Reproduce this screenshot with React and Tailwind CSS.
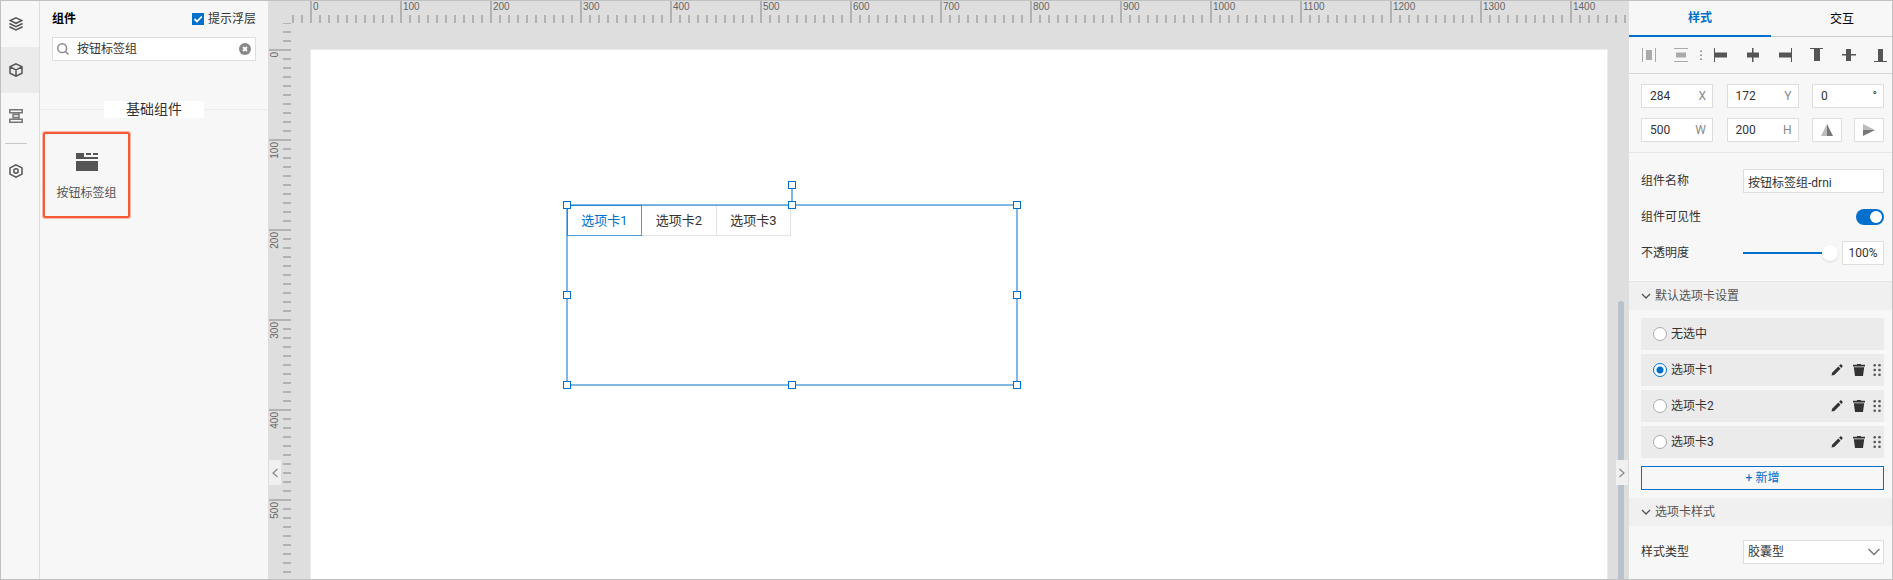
import { useState } from 'react'

const railItems = ['图层', '组件', '页面', '设置']

const alignTools = [
  { label: '左对齐', d: 'M1 0h1v14h-1zM2 4.500h12v5h-12z' },
  { label: '水平居中', d: 'M7 0h1.500v14h-1.500zM2 4.500h12v5h-12z' },
  { label: '右对齐', d: 'M14 0h1v14h-1zM2 4.500h12v5h-12z' },
  { label: '顶对齐', d: 'M1 0h13v1h-13zM5 1h6v12h-6z' },
  { label: '垂直居中', d: 'M1 6h14v1.500h-14zM5 1h5v12h-5z' },
  { label: '底对齐', d: 'M1 13h13v1h-13zM5 1h5v12h-5z' },
]

const options = ['无选中', '选项卡1', '选项卡2', '选项卡3']
const tabs = ['选项卡1', '选项卡2', '选项卡3']

const handles = [
  '-left-[3px] -top-[3px]',
  'left-[222px] -top-[3px]',
  '-right-[3px] -top-[3px]',
  '-left-[3px] top-[87px]',
  '-right-[3px] top-[87px]',
  '-left-[3px] -bottom-[3px]',
  'left-[222px] -bottom-[3px]',
  '-right-[3px] -bottom-[3px]',
  'left-[222px] -top-[23px]',
]

const range = (n) => Array.from({ length: n }, (_, i) => i * 100)

function RailIcon({ name }) {
  return (
    <svg className="w-3.5 h-3.5" viewBox="0 0 14 14" fill="none" stroke="#555" strokeWidth="1.5">
      {name === '图层' && (
        <>
          <path d="M7 .9l5.800 2.700L7 6.300 1.200 3.600z" />
          <path d="M.4 6.500L7 9.600l6.600-3.100M.4 9.800L7 12.900l6.600-3.100" />
        </>
      )}
      {name === '组件' && <path d="M7 .8l6 3v6.400l-6 3-6-3V3.800zM1 3.800l6 3 6-3M7 6.800v6.400" />}
      {name === '页面' && <path stroke="#777" d="M.8.8h12.400v3H.8zM10 3.800v1.700H4v3h6v1.700M.8 10.200h12.400v3H.8zM4 5.500h6v3" />}
      {name === '设置' && (
        <>
          <path d="M7 .8l6 3.100v6.200l-6 3.100-6-3.100V3.900z" />
          <circle cx="7" cy="7" r="2.200" />
        </>
      )}
    </svg>
  )
}

function Rail() {
  return (
    <nav className="w-[39px] shrink-0 border-r border-[#dedede] flex flex-col">
      {railItems.map((name) => (
        <div key={name}>
          {name === '设置' && <div className="w-[22px] h-px ml-1 mt-1 mb-1 bg-[#c9c9c9]" />}
          <button
            type="button"
            aria-label={name}
            className={`w-full h-[46px] pl-2 flex items-center ${name === '组件' ? 'bg-[#ebebeb]' : ''}`}
          >
            <RailIcon name={name} />
          </button>
        </div>
      ))}
    </nav>
  )
}

function ComponentPanel() {
  const [query, setQuery] = useState('按钮标签组')

  return (
    <aside className="w-[228px] shrink-0">
      <div className="px-3 pt-2">
        <div className="h-5 flex items-center justify-between">
          <h2 className="font-bold text-black">组件</h2>
          <label className="flex items-center gap-1">
            <span className="grid">
              <input
                type="checkbox"
                defaultChecked
                className="peer col-start-1 row-start-1 appearance-none w-3 h-3 bg-white checked:bg-[#0070cc]"
              />
              <svg className="col-start-1 row-start-1 w-3 h-3 pointer-events-none" viewBox="0 0 12 12" fill="none" stroke="#fff" strokeWidth="1.800">
                <path d="M2.500 6l2.500 2.500L9.800 3.500" />
              </svg>
            </span>
            提示浮层
          </label>
        </div>
        <div className="mt-2 h-6 flex items-center border border-[#dedede] bg-white pl-1 pr-1">
          <svg className="w-3 h-3 shrink-0" viewBox="0 0 12 12" fill="none" stroke="#888" strokeWidth="1.500">
            <circle cx="5.200" cy="5.200" r="4.400" />
            <path d="M8.500 8.500l3 3" />
          </svg>
          <input
            aria-label="搜索组件"
            value={query}
            onChange={(e) => setQuery(e.target.value)}
            className="flex-1 min-w-0 pl-2 outline-none"
          />
          <button type="button" aria-label="清空" onClick={() => setQuery('')}>
            <svg className="w-3 h-3" viewBox="0 0 12 12">
              <circle cx="6" cy="6" r="6" fill="#888" />
              <path d="M4 4l4 4M8 4l-4 4" stroke="#fff" strokeWidth="1.800" />
            </svg>
          </button>
        </div>
      </div>
      <div className="mt-10 flex items-center">
        <div className="flex-1 h-px bg-[#ebebeb]" />
        <h3 className="w-[100px] h-[17px] bg-white text-sm leading-[17px] text-center">基础组件</h3>
        <div className="flex-1 h-px bg-[#ebebeb]" />
      </div>
      <button
        type="button"
        className="mt-3.5 ml-[3px] w-[87px] h-[86px] rounded-xs border-2 border-[#f55a36] ring-1 ring-[#f55a36]/40 flex flex-col items-center pt-[19px] gap-3"
      >
        <svg className="w-[22px] h-[18px]" viewBox="0 0 22 18" fill="#555">
          <path d="M0 0h8v4h14v2H0zM10 0h5v2h-5zM17 0h5v2h-5zM0 8h22v10H0z" />
        </svg>
        <span className="text-[#555] leading-5">按钮标签组</span>
      </button>
    </aside>
  )
}

function HorizontalRuler() {
  return (
    <div className="flex-1 min-w-0 flex overflow-hidden items-end text-[10px] leading-3 font-['Liberation_Sans',sans-serif] text-[#666]">
      <div className="w-[18px] shrink-0 h-2 bg-[linear-gradient(90deg,#b2b2b2_2px,transparent_2px)] bg-size-[9px_8px]" />
      {range(15).map((n) => (
        <div key={n} className="w-[90px] h-[22px] shrink-0 flex flex-col justify-between border-l-2 border-[#b2b2b2]">
          <span className="pl-px">{n}</span>
          <div className="-ml-0.5 h-2 bg-[linear-gradient(90deg,#b2b2b2_2px,transparent_2px)] bg-size-[9px_8px]" />
        </div>
      ))}
    </div>
  )
}

function VerticalRuler() {
  return (
    <div className="w-6 shrink-0 px-px h-full overflow-hidden text-[10px] leading-3 font-['Liberation_Sans',sans-serif] text-[#666]">
      <div className="ml-auto w-2 h-[26px] bg-[linear-gradient(#b2b2b2_2px,transparent_2px)] bg-size-[8px_9px] bg-bottom" />
      {range(6).map((n) => (
        <div key={n} className="h-[90px] flex justify-between border-t-2 border-[#b2b2b2]">
          <span className="h-fit pb-px [writing-mode:vertical-rl] rotate-180">{n}</span>
          <div className="-mt-0.5 w-2 bg-[linear-gradient(#b2b2b2_2px,transparent_2px)] bg-size-[8px_9px]" />
        </div>
      ))}
    </div>
  )
}

function Stage() {
  return (
    <main className="relative flex-1 min-w-0 flex flex-col bg-[#dedede] overflow-hidden">
      <div className="h-[22px] shrink-0 flex">
        <div className="w-6 shrink-0" />
        <HorizontalRuler />
      </div>
      <div className="flex-1 min-h-0 flex">
        <VerticalRuler />
        <div className="flex-1 min-w-0 pl-[18px] pr-[21px] pt-[26px]">
          <div className="relative h-full bg-white border border-b-0 border-[#ebebeb]">
            <div className="absolute left-[255px] top-[154px] w-[452px] h-[182px]">
              <div className="p-px flex text-[13px]" role="tablist">
                {tabs.map((tab, i) => (
                  <button
                    key={tab}
                    type="button"
                    role="tab"
                    aria-selected={i === 0}
                    className={`w-[75px] last:w-[74px] h-[31px] border ${
                      i === 0 ? 'border-[#4e9bdb] text-[#0070cc]' : 'border-l-0 border-[#e2e2e2]'
                    }`}
                  >
                    {tab}
                  </button>
                ))}
              </div>
              <div className="absolute inset-0 border-2 border-[#0070cc]/50" />
              <div className="absolute left-[225px] -top-4 w-0.5 h-4 bg-[#0070cc]/50" />
              {handles.map((pos) => (
                <div key={pos} className={`absolute w-2 h-2 border border-[#0070cc] bg-white ${pos}`} />
              ))}
            </div>
          </div>
        </div>
      </div>
      <div className="absolute right-[5px] top-[300px] bottom-0 w-1.5 rounded-t-full bg-[#b9c2ca]" />
      <button type="button" aria-label="收起左侧" className="absolute left-px bottom-[94px] w-3 h-[25px] bg-[#f0f0f0] flex items-center justify-center">
        <svg className="w-1.5 h-2.5" viewBox="0 0 6 10" fill="none" stroke="#888" strokeWidth="1.200">
          <path d="M5.500 1L1 5l4.500 4" />
        </svg>
      </button>
      <button type="button" aria-label="收起右侧" className="absolute right-px bottom-[94px] w-3 h-[25px] bg-[#f0f0f0] flex items-center justify-center">
        <svg className="w-1.5 h-2.5" viewBox="0 0 6 10" fill="none" stroke="#888" strokeWidth="1.200">
          <path d="M.5 1L5 5 .5 9" />
        </svg>
      </button>
    </main>
  )
}

function NumberBox({ unit, value }) {
  return (
    <label className="w-[72px] h-6 flex items-center border border-[#dedede] bg-white pl-2 pr-1.5">
      <input defaultValue={value} className="flex-1 min-w-0 outline-none" />
      <span className={unit === '°' ? 'text-[#333]' : 'text-[#888]'}>{unit}</span>
    </label>
  )
}

function SectionHeader({ children }) {
  return (
    <button type="button" className="w-full h-7 bg-[#f0f0f0] flex items-center gap-1 pl-3 text-[#555]">
      <svg className="w-2.5 h-2.5" viewBox="0 0 10 10" fill="none" stroke="#555" strokeWidth="1.300">
        <path d="M1 3l4 4 4-4" />
      </svg>
      {children}
    </button>
  )
}

function OptionRow({ label, checked, onSelect }) {
  return (
    <div className="h-8 bg-[#ebebeb] flex items-center pl-3 pr-[3px]">
      <label className="flex-1 flex items-center gap-1">
        <input
          type="radio"
          name="default-tab"
          checked={checked}
          onChange={onSelect}
          className="appearance-none w-3.5 h-3.5 rounded-full border border-[#aaa] bg-white checked:border-[#0070cc] checked:bg-[radial-gradient(#0070cc_3px,#fff_4px)]"
        />
        {label}
      </label>
      {label !== '无选中' && (
        <div className="flex items-center">
          <button type="button" aria-label={`编辑${label}`}>
            <svg className="w-3 h-3" viewBox="0 0 12 12" fill="#333">
              <path d="M.5 11.500l.6-2.800 6.200-6.200 2.200 2.200-6.200 6.200zM8.100 1.700L9.200.6c.4-.4.8-.4 1.200 0l1 1c.4.4.4.8 0 1.200l-1.100 1.100z" />
            </svg>
          </button>
          <button type="button" aria-label={`删除${label}`} className="ml-2.5">
            <svg className="w-3 h-3" viewBox="0 0 12 12" fill="#333">
              <path d="M0 .8h4V0h4v.8h4v1.700H0zM.8 3.200h10.400L10 12H2z" />
            </svg>
          </button>
          <svg className="ml-2 w-2 h-3" viewBox="0 0 8 12" fill="#555">
            {[1.3, 6, 10.7].map((y) => (
              <g key={y}>
                <circle cx="1.700" cy={y} r="1.300" />
                <circle cx="6.500" cy={y} r="1.300" />
              </g>
            ))}
          </svg>
        </div>
      )}
    </div>
  )
}

function StylePanel() {
  const [selected, setSelected] = useState('选项卡1')

  return (
    <aside className="w-[263px] shrink-0 overflow-hidden">
      <div className="flex h-9" role="tablist">
        <button type="button" role="tab" aria-selected="true" className="w-[142px] shrink-0 border-b-2 border-[#0070cc] text-[#0070cc] font-bold">
          样式
        </button>
        <button type="button" role="tab" aria-selected="false" className="w-[142px] shrink-0 border-b border-[#ccc] text-black">
          交互
        </button>
      </div>
      <div className="h-[37px] flex items-center pl-3 border-b border-[#d6d6d6]">
        <button type="button" aria-label="水平分布" className="shrink-0 mr-[17px]">
          <svg className="w-[15px] h-3.5" viewBox="0 0 15 14" fill="#aaa">
            <path d="M1 0h1v14H1zM14 0h1v14h-1zM5 2h6v10H5z" />
          </svg>
        </button>
        <button type="button" aria-label="垂直分布" className="shrink-0 mr-3">
          <svg className="w-[15px] h-3.5" viewBox="0 0 15 14" fill="#aaa">
            <path d="M1 0h14v1H1zM1 13h14v1H1zM3 4.500h10v5H3z" />
          </svg>
        </button>
        <svg className="w-0.5 h-3 shrink-0 mr-[11px]" viewBox="0 0 2 12" fill="#999">
          <path d="M0 1.500h2v1.500H0zM0 5.500h2v1.500H0zM0 9.500h2v1.500H0z" />
        </svg>
        <div className="flex gap-[17px]">
          {alignTools.map(({ label, d }) => (
            <button key={label} type="button" aria-label={label} className="shrink-0">
              <svg className="w-[15px] h-3.5" viewBox="0 0 15 14" fill="#555">
                <path d={d} />
              </svg>
            </button>
          ))}
        </div>
      </div>
      <div className="pl-3 pr-2 pt-2.5 pb-2.5 flex flex-col gap-2.5 border-b border-[#e6e6e6]">
        <div className="flex justify-between">
          <NumberBox unit="X" value="284" />
          <NumberBox unit="Y" value="172" />
          <NumberBox unit="°" value="0" />
        </div>
        <div className="flex justify-between">
          <NumberBox unit="W" value="500" />
          <NumberBox unit="H" value="200" />
          <div className="w-[72px] flex justify-between">
            <button type="button" aria-label="水平翻转" className="w-[30px] h-6 border border-[#dedede] bg-white flex items-center justify-center">
              <svg className="w-3 h-3" viewBox="0 0 12 12">
                <path d="M6 0v12H0z" fill="#bbb" />
                <path d="M6 0v12h6z" fill="#777" />
              </svg>
            </button>
            <button type="button" aria-label="垂直翻转" className="w-[30px] h-6 border border-[#dedede] bg-white flex items-center justify-center">
              <svg className="w-3 h-3" viewBox="0 0 12 12">
                <path d="M0 6h12L0 0z" fill="#bbb" />
                <path d="M0 6h12L0 12z" fill="#777" />
              </svg>
            </button>
          </div>
        </div>
      </div>
      <div className="pl-3 pr-2 pt-4 pb-4 flex flex-col gap-3 border-b border-[#e6e6e6]">
        <div className="h-6 flex items-center justify-between">
          <label htmlFor="widget-name">组件名称</label>
          <input id="widget-name" defaultValue="按钮标签组-drni" className="w-[141px] h-6 border border-[#dedede] bg-white px-1 outline-none" />
        </div>
        <div className="h-6 flex items-center justify-between">
          <label htmlFor="widget-visible">组件可见性</label>
          <input
            id="widget-visible"
            type="checkbox"
            role="switch"
            defaultChecked
            className="appearance-none w-7 h-4 rounded-full bg-[#ccc] checked:bg-[#0070cc] flex items-center px-0.5 checked:justify-end before:w-3 before:h-3 before:rounded-full before:bg-white"
          />
        </div>
        <div className="h-6 flex items-center justify-between">
          <label htmlFor="widget-opacity">不透明度</label>
          <div className="w-[141px] flex items-center justify-between">
            <input
              id="widget-opacity"
              type="range"
              defaultValue="100"
              className="appearance-none w-[95px] h-4 bg-transparent [&::-webkit-slider-runnable-track]:h-0.5 [&::-webkit-slider-runnable-track]:bg-[#0070cc] [&::-webkit-slider-thumb]:appearance-none [&::-webkit-slider-thumb]:w-4 [&::-webkit-slider-thumb]:h-4 [&::-webkit-slider-thumb]:-mt-[7px] [&::-webkit-slider-thumb]:rounded-full [&::-webkit-slider-thumb]:bg-white [&::-webkit-slider-thumb]:shadow"
            />
            <input aria-label="不透明度数值" defaultValue="100%" className="w-[42px] h-6 border border-[#dedede] bg-white text-center outline-none" />
          </div>
        </div>
      </div>
      <SectionHeader>默认选项卡设置</SectionHeader>
      <div className="pl-3 pr-2 py-2">
        <div className="flex flex-col gap-1">
          {options.map((label) => (
            <OptionRow key={label} label={label} checked={label === selected} onSelect={() => setSelected(label)} />
          ))}
        </div>
        <button type="button" className="mt-2 w-full h-6 border border-[#0070cc] text-[#0070cc]">
          + 新增
        </button>
      </div>
      <SectionHeader>选项卡样式</SectionHeader>
      <div className="pl-3 pr-2 pt-3.5 flex items-center justify-between">
        <label htmlFor="tab-style">样式类型</label>
        <div className="grid items-center">
          <select id="tab-style" className="col-start-1 row-start-1 appearance-none w-[141px] h-6 border border-[#dedede] bg-white px-1">
            <option>胶囊型</option>
          </select>
          <svg className="col-start-1 row-start-1 justify-self-end mr-1 w-3 h-3 pointer-events-none" viewBox="0 0 12 12" fill="none" stroke="#777" strokeWidth="1.500">
            <path d="M.5 3L6 8.500 11.500 3" />
          </svg>
        </div>
      </div>
    </aside>
  )
}

export default function App() {
  return (
    <div className="h-screen flex border border-[#c1c1c1] bg-[#f7f7f7] text-xs text-[#333] font-[Roboto,'Noto_Sans_CJK_SC',sans-serif]">
      <Rail />
      <ComponentPanel />
      <Stage />
      <StylePanel />
    </div>
  )
}
